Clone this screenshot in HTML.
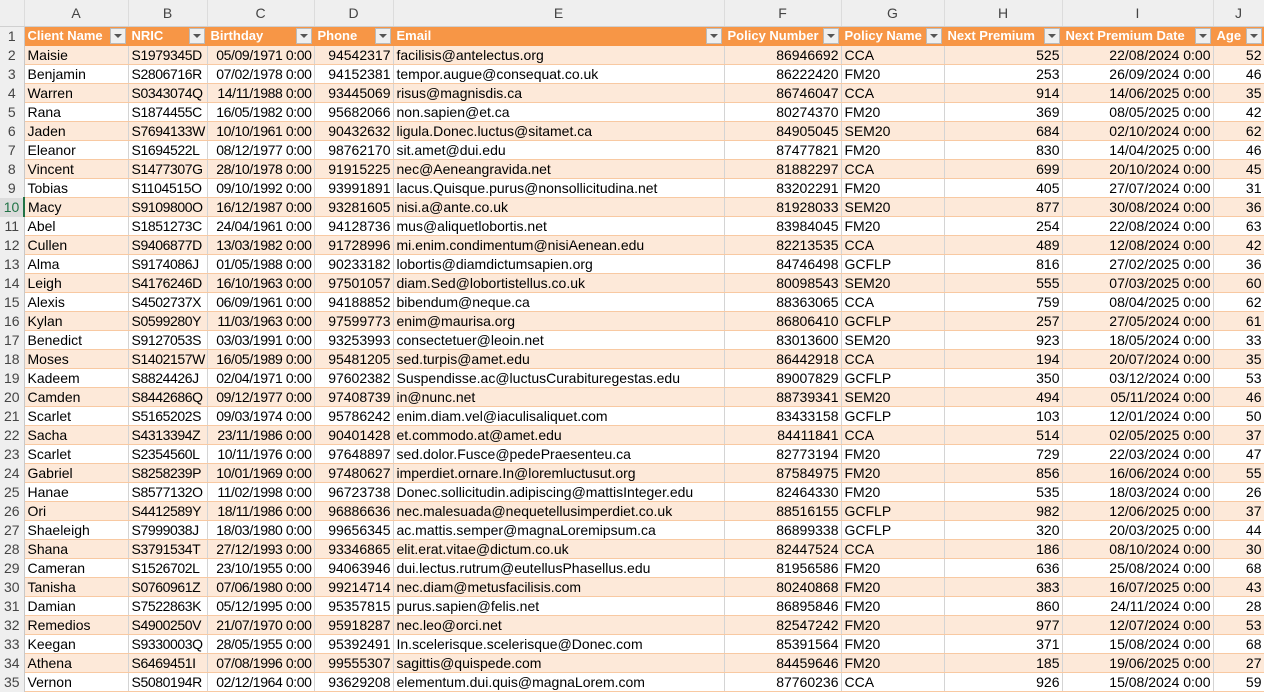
<!DOCTYPE html>
<html><head><meta charset="utf-8"><style>
body{margin:0;width:1264px;height:691px;overflow:hidden;background:#fff;font-family:"Liberation Sans",Arial,sans-serif;font-size:14px;color:#000}
table{border-collapse:collapse;table-layout:fixed;position:absolute;left:0;top:0;width:1264px}
td{height:18px;padding:0 2px 0 3px;white-space:nowrap;overflow:hidden;border-right:1px solid #d4d4d4;border-bottom:1px solid #f8c9a2;line-height:18px}
tr:not(.h):not(.t) td:nth-child(3),tr:not(.h):not(.t) td:nth-child(4){letter-spacing:-0.4px}
tr.h td{height:26px;background:#efefef;color:#444;text-align:center;font-size:14px;border-bottom:1px solid #d0d0d0;border-right:1px solid #dcdcdc;padding:0}
td.r{background:#efefef;color:#444;text-align:center;padding:0;border-bottom:none;border-right:1px solid #c8c8c8;font-size:14px}
tr:nth-child(odd):not(.h) td:not(.r){background:#fde9d9}
tr.t td:not(.r){background:#f79646 !important;color:#fff;font-weight:bold;font-size:13px;position:relative;border-right:1px solid #f79646;border-bottom:1px solid #f79646}
.f{position:absolute;right:2px;top:1px;width:16px;height:16px;background:#efefef;border:1px solid #bbb;box-sizing:border-box}
.f:after{content:"";position:absolute;left:3px;top:5px;border-left:4px solid transparent;border-right:4px solid transparent;border-top:4px solid #555}
.n{text-align:right}
tr.sel td.r{color:#217346;background:#dcdcdc;border-right:2px solid #217346}
</style></head><body>
<table>
<colgroup><col style="width:24px"><col style="width:104px"><col style="width:79px"><col style="width:107px"><col style="width:79px"><col style="width:331px"><col style="width:117px"><col style="width:103px"><col style="width:118px"><col style="width:151px"><col style="width:51px"></colgroup>
<tr class="h"><td style="background:#efefef"></td><td>A</td><td>B</td><td>C</td><td>D</td><td>E</td><td>F</td><td>G</td><td>H</td><td>I</td><td>J</td></tr>
<tr class="t"><td class="r">1</td><td>Client Name<span class="f"></span></td><td>NRIC<span class="f"></span></td><td>Birthday<span class="f"></span></td><td>Phone<span class="f"></span></td><td>Email<span class="f"></span></td><td>Policy Number<span class="f"></span></td><td>Policy Name<span class="f"></span></td><td>Next Premium<span class="f"></span></td><td>Next Premium Date<span class="f"></span></td><td>Age<span class="f"></span></td></tr>
<tr><td class="r">2</td><td>Maisie</td><td>S1979345D</td><td class="n">05/09/1971 0:00</td><td class="n">94542317</td><td>facilisis@antelectus.org</td><td class="n">86946692</td><td>CCA</td><td class="n">525</td><td class="n">22/08/2024 0:00</td><td class="n">52</td></tr>
<tr><td class="r">3</td><td>Benjamin</td><td>S2806716R</td><td class="n">07/02/1978 0:00</td><td class="n">94152381</td><td>tempor.augue@consequat.co.uk</td><td class="n">86222420</td><td>FM20</td><td class="n">253</td><td class="n">26/09/2024 0:00</td><td class="n">46</td></tr>
<tr><td class="r">4</td><td>Warren</td><td>S0343074Q</td><td class="n">14/11/1988 0:00</td><td class="n">93445069</td><td>risus@magnisdis.ca</td><td class="n">86746047</td><td>CCA</td><td class="n">914</td><td class="n">14/06/2025 0:00</td><td class="n">35</td></tr>
<tr><td class="r">5</td><td>Rana</td><td>S1874455C</td><td class="n">16/05/1982 0:00</td><td class="n">95682066</td><td>non.sapien@et.ca</td><td class="n">80274370</td><td>FM20</td><td class="n">369</td><td class="n">08/05/2025 0:00</td><td class="n">42</td></tr>
<tr><td class="r">6</td><td>Jaden</td><td>S7694133W</td><td class="n">10/10/1961 0:00</td><td class="n">90432632</td><td>ligula.Donec.luctus@sitamet.ca</td><td class="n">84905045</td><td>SEM20</td><td class="n">684</td><td class="n">02/10/2024 0:00</td><td class="n">62</td></tr>
<tr><td class="r">7</td><td>Eleanor</td><td>S1694522L</td><td class="n">08/12/1977 0:00</td><td class="n">98762170</td><td>sit.amet@dui.edu</td><td class="n">87477821</td><td>FM20</td><td class="n">830</td><td class="n">14/04/2025 0:00</td><td class="n">46</td></tr>
<tr><td class="r">8</td><td>Vincent</td><td>S1477307G</td><td class="n">28/10/1978 0:00</td><td class="n">91915225</td><td>nec@Aeneangravida.net</td><td class="n">81882297</td><td>CCA</td><td class="n">699</td><td class="n">20/10/2024 0:00</td><td class="n">45</td></tr>
<tr><td class="r">9</td><td>Tobias</td><td>S1104515O</td><td class="n">09/10/1992 0:00</td><td class="n">93991891</td><td>lacus.Quisque.purus@nonsollicitudina.net</td><td class="n">83202291</td><td>FM20</td><td class="n">405</td><td class="n">27/07/2024 0:00</td><td class="n">31</td></tr>
<tr class="sel"><td class="r">10</td><td>Macy</td><td>S9109800O</td><td class="n">16/12/1987 0:00</td><td class="n">93281605</td><td>nisi.a@ante.co.uk</td><td class="n">81928033</td><td>SEM20</td><td class="n">877</td><td class="n">30/08/2024 0:00</td><td class="n">36</td></tr>
<tr><td class="r">11</td><td>Abel</td><td>S1851273C</td><td class="n">24/04/1961 0:00</td><td class="n">94128736</td><td>mus@aliquetlobortis.net</td><td class="n">83984045</td><td>FM20</td><td class="n">254</td><td class="n">22/08/2024 0:00</td><td class="n">63</td></tr>
<tr><td class="r">12</td><td>Cullen</td><td>S9406877D</td><td class="n">13/03/1982 0:00</td><td class="n">91728996</td><td>mi.enim.condimentum@nisiAenean.edu</td><td class="n">82213535</td><td>CCA</td><td class="n">489</td><td class="n">12/08/2024 0:00</td><td class="n">42</td></tr>
<tr><td class="r">13</td><td>Alma</td><td>S9174086J</td><td class="n">01/05/1988 0:00</td><td class="n">90233182</td><td>lobortis@diamdictumsapien.org</td><td class="n">84746498</td><td>GCFLP</td><td class="n">816</td><td class="n">27/02/2025 0:00</td><td class="n">36</td></tr>
<tr><td class="r">14</td><td>Leigh</td><td>S4176246D</td><td class="n">16/10/1963 0:00</td><td class="n">97501057</td><td>diam.Sed@lobortistellus.co.uk</td><td class="n">80098543</td><td>SEM20</td><td class="n">555</td><td class="n">07/03/2025 0:00</td><td class="n">60</td></tr>
<tr><td class="r">15</td><td>Alexis</td><td>S4502737X</td><td class="n">06/09/1961 0:00</td><td class="n">94188852</td><td>bibendum@neque.ca</td><td class="n">88363065</td><td>CCA</td><td class="n">759</td><td class="n">08/04/2025 0:00</td><td class="n">62</td></tr>
<tr><td class="r">16</td><td>Kylan</td><td>S0599280Y</td><td class="n">11/03/1963 0:00</td><td class="n">97599773</td><td>enim@maurisa.org</td><td class="n">86806410</td><td>GCFLP</td><td class="n">257</td><td class="n">27/05/2024 0:00</td><td class="n">61</td></tr>
<tr><td class="r">17</td><td>Benedict</td><td>S9127053S</td><td class="n">03/03/1991 0:00</td><td class="n">93253993</td><td>consectetuer@leoin.net</td><td class="n">83013600</td><td>SEM20</td><td class="n">923</td><td class="n">18/05/2024 0:00</td><td class="n">33</td></tr>
<tr><td class="r">18</td><td>Moses</td><td>S1402157W</td><td class="n">16/05/1989 0:00</td><td class="n">95481205</td><td>sed.turpis@amet.edu</td><td class="n">86442918</td><td>CCA</td><td class="n">194</td><td class="n">20/07/2024 0:00</td><td class="n">35</td></tr>
<tr><td class="r">19</td><td>Kadeem</td><td>S8824426J</td><td class="n">02/04/1971 0:00</td><td class="n">97602382</td><td>Suspendisse.ac@luctusCurabituregestas.edu</td><td class="n">89007829</td><td>GCFLP</td><td class="n">350</td><td class="n">03/12/2024 0:00</td><td class="n">53</td></tr>
<tr><td class="r">20</td><td>Camden</td><td>S8442686Q</td><td class="n">09/12/1977 0:00</td><td class="n">97408739</td><td>in@nunc.net</td><td class="n">88739341</td><td>SEM20</td><td class="n">494</td><td class="n">05/11/2024 0:00</td><td class="n">46</td></tr>
<tr><td class="r">21</td><td>Scarlet</td><td>S5165202S</td><td class="n">09/03/1974 0:00</td><td class="n">95786242</td><td>enim.diam.vel@iaculisaliquet.com</td><td class="n">83433158</td><td>GCFLP</td><td class="n">103</td><td class="n">12/01/2024 0:00</td><td class="n">50</td></tr>
<tr><td class="r">22</td><td>Sacha</td><td>S4313394Z</td><td class="n">23/11/1986 0:00</td><td class="n">90401428</td><td>et.commodo.at@amet.edu</td><td class="n">84411841</td><td>CCA</td><td class="n">514</td><td class="n">02/05/2025 0:00</td><td class="n">37</td></tr>
<tr><td class="r">23</td><td>Scarlet</td><td>S2354560L</td><td class="n">10/11/1976 0:00</td><td class="n">97648897</td><td>sed.dolor.Fusce@pedePraesenteu.ca</td><td class="n">82773194</td><td>FM20</td><td class="n">729</td><td class="n">22/03/2024 0:00</td><td class="n">47</td></tr>
<tr><td class="r">24</td><td>Gabriel</td><td>S8258239P</td><td class="n">10/01/1969 0:00</td><td class="n">97480627</td><td>imperdiet.ornare.In@loremluctusut.org</td><td class="n">87584975</td><td>FM20</td><td class="n">856</td><td class="n">16/06/2024 0:00</td><td class="n">55</td></tr>
<tr><td class="r">25</td><td>Hanae</td><td>S8577132O</td><td class="n">11/02/1998 0:00</td><td class="n">96723738</td><td>Donec.sollicitudin.adipiscing@mattisInteger.edu</td><td class="n">82464330</td><td>FM20</td><td class="n">535</td><td class="n">18/03/2024 0:00</td><td class="n">26</td></tr>
<tr><td class="r">26</td><td>Ori</td><td>S4412589Y</td><td class="n">18/11/1986 0:00</td><td class="n">96886636</td><td>nec.malesuada@nequetellusimperdiet.co.uk</td><td class="n">88516155</td><td>GCFLP</td><td class="n">982</td><td class="n">12/06/2025 0:00</td><td class="n">37</td></tr>
<tr><td class="r">27</td><td>Shaeleigh</td><td>S7999038J</td><td class="n">18/03/1980 0:00</td><td class="n">99656345</td><td>ac.mattis.semper@magnaLoremipsum.ca</td><td class="n">86899338</td><td>GCFLP</td><td class="n">320</td><td class="n">20/03/2025 0:00</td><td class="n">44</td></tr>
<tr><td class="r">28</td><td>Shana</td><td>S3791534T</td><td class="n">27/12/1993 0:00</td><td class="n">93346865</td><td>elit.erat.vitae@dictum.co.uk</td><td class="n">82447524</td><td>CCA</td><td class="n">186</td><td class="n">08/10/2024 0:00</td><td class="n">30</td></tr>
<tr><td class="r">29</td><td>Cameran</td><td>S1526702L</td><td class="n">23/10/1955 0:00</td><td class="n">94063946</td><td>dui.lectus.rutrum@eutellusPhasellus.edu</td><td class="n">81956586</td><td>FM20</td><td class="n">636</td><td class="n">25/08/2024 0:00</td><td class="n">68</td></tr>
<tr><td class="r">30</td><td>Tanisha</td><td>S0760961Z</td><td class="n">07/06/1980 0:00</td><td class="n">99214714</td><td>nec.diam@metusfacilisis.com</td><td class="n">80240868</td><td>FM20</td><td class="n">383</td><td class="n">16/07/2025 0:00</td><td class="n">43</td></tr>
<tr><td class="r">31</td><td>Damian</td><td>S7522863K</td><td class="n">05/12/1995 0:00</td><td class="n">95357815</td><td>purus.sapien@felis.net</td><td class="n">86895846</td><td>FM20</td><td class="n">860</td><td class="n">24/11/2024 0:00</td><td class="n">28</td></tr>
<tr><td class="r">32</td><td>Remedios</td><td>S4900250V</td><td class="n">21/07/1970 0:00</td><td class="n">95918287</td><td>nec.leo@orci.net</td><td class="n">82547242</td><td>FM20</td><td class="n">977</td><td class="n">12/07/2024 0:00</td><td class="n">53</td></tr>
<tr><td class="r">33</td><td>Keegan</td><td>S9330003Q</td><td class="n">28/05/1955 0:00</td><td class="n">95392491</td><td>In.scelerisque.scelerisque@Donec.com</td><td class="n">85391564</td><td>FM20</td><td class="n">371</td><td class="n">15/08/2024 0:00</td><td class="n">68</td></tr>
<tr><td class="r">34</td><td>Athena</td><td>S6469451I</td><td class="n">07/08/1996 0:00</td><td class="n">99555307</td><td>sagittis@quispede.com</td><td class="n">84459646</td><td>FM20</td><td class="n">185</td><td class="n">19/06/2025 0:00</td><td class="n">27</td></tr>
<tr><td class="r">35</td><td>Vernon</td><td>S5080194R</td><td class="n">02/12/1964 0:00</td><td class="n">93629208</td><td>elementum.dui.quis@magnaLorem.com</td><td class="n">87760236</td><td>CCA</td><td class="n">926</td><td class="n">15/08/2024 0:00</td><td class="n">59</td></tr>
</table>
</body></html>
